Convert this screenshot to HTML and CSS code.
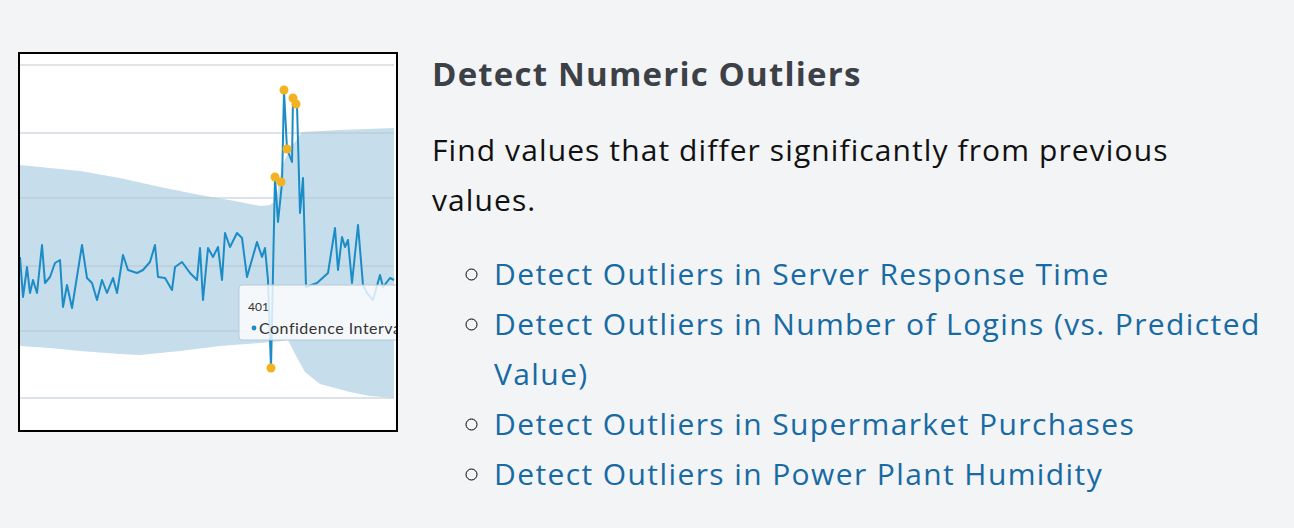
FILE: index.html
```html
<!DOCTYPE html>
<html lang="en">
<head>
	<title>Detect Numeric Outliers</title>
	<link rel="stylesheet" href="styles.css">
</head>

<body>
	<div class="feature">
		<div class="thumb">
			<svg class="chart" viewBox="0 0 376 376" width="376" height="376">
				<!-- confidence band -->
				<polygon class="band" points="0,111 20,113 60,117 100,124 140,133 180,141 215,147 240,152 250,151 256,147 262,112 270,95 282,78 320,76 374,74 374,344 350,342 330,338 300,330 285,318 275,300 268,286 262,287 240,289 200,292 160,297 120,301 100,300 60,297 30,294 0,292"/>
				<!-- grid -->
				<line class="grid top" x1="0" y1="11" x2="374" y2="11"/>
				<line class="grid" x1="0" y1="79" x2="374" y2="79"/>
				<line class="grid" x1="0" y1="144" x2="374" y2="144"/>
				<line class="grid" x1="0" y1="212" x2="374" y2="212"/>
				<line class="grid" x1="0" y1="277" x2="374" y2="277"/>
				<line class="grid" x1="0" y1="344" x2="374" y2="344"/>
				<!-- series -->
				<polyline class="series" points="0,203 3,243 7,213 10,239 13,226 17,239 22,191 25,229 30,223 35,209 40,206 43,253 47,231 52,254 62,191 67,224 72,229 77,246 82,226 87,239 93,224 97,239 103,201 108,216 117,219 123,216 130,208 135,191 138,223 145,224 152,236 155,213 162,208 170,219 177,226 180,194 183,246 188,194 193,203 198,193 202,226 205,179 210,193 217,179 222,184 227,223 237,188 242,203 245,194 248,226 251,314 255,123 258,168 262,129 264,37 267,95 272,108 273,44 277,51 280,159 283,124 286,233 297,229 308,219 315,174 318,216 322,183 325,193 328,186 332,229 338,171 343,231 347,239 353,246 360,221 363,233 370,224 374,226"/>
				<!-- outliers -->
				<circle class="dot" cx="264" cy="36" r="4.5"/>
				<circle class="dot" cx="273" cy="44" r="4.5"/>
				<circle class="dot" cx="276" cy="50" r="4.5"/>
				<circle class="dot" cx="267" cy="95" r="4.5"/>
				<circle class="dot" cx="255" cy="123" r="4.5"/>
				<circle class="dot" cx="261" cy="128" r="4.5"/>
				<circle class="dot" cx="251" cy="314" r="4.5"/>
				<!-- tooltip -->
				<rect class="tip" x="219" y="231" width="170" height="55" rx="3"/>
				<text class="tip-title" x="228" y="257">401</text>
				<circle class="tip-dot" cx="234" cy="274" r="2.4"/>
				<text class="tip-label" x="239" y="280">Confidence Interval</text>
			</svg>
		</div>

		<div class="info">
			<h2>Detect Numeric Outliers</h2>
			<p>Find values that differ significantly from previous values.</p>
			<ul>
				<li><a href="#">Detect Outliers in Server Response Time</a></li>
				<li><a href="#">Detect Outliers in Number of Logins (vs. Predicted Value)</a></li>
				<li><a href="#">Detect Outliers in Supermarket Purchases</a></li>
				<li><a href="#">Detect Outliers in Power Plant Humidity</a></li>
			</ul>
		</div>
	</div>
</body>
</html>
```

FILE: styles.css
```css
body {
	margin: 0;
	padding: 0;
	background: #f3f4f6;
	font-family: 'Open Sans', sans-serif;
}

.feature {
	display: flex;
	gap: 34px;
	padding: 52px 0 0 18px;
}

.thumb {
	flex: none;
	width: 376px;
	height: 376px;
	border: 2px solid #000;
	background: #fff;
	overflow: hidden;
}

.chart {
	display: block;
}

.band {
	fill: #c6ddec;
}

.grid {
	stroke: #b9c6d0;
	stroke-width: 1.2;
}

.grid.top {
	stroke: #e3e3e3;
	stroke-width: 2;
}

.series {
	fill: none;
	stroke: #1b8cc6;
	stroke-width: 2;
	stroke-linejoin: round;
}

.dot {
	fill: #f3b320;
}

.tip {
	fill: rgba(255, 255, 255, 0.8);
	stroke: #b5cad8;
	stroke-width: 1;
}

.tip-title {
	font-family: 'Lato', sans-serif;
	font-size: 12px;
	fill: #333;
}

.tip-label {
	font-family: 'Lato', sans-serif;
	font-size: 16px;
	letter-spacing: 0.5px;
	fill: #333;
}

.tip-dot {
	fill: #1b8cc6;
}

.info {
	width: 840px;
}

.info h2 {
	margin: 0;
	font-size: 33px;
	line-height: 44px;
	font-weight: 700;
	letter-spacing: 1.2px;
	color: #3c4148;
}

.info p {
	margin: 29px 0 0;
	font-size: 30px;
	line-height: 50px;
	letter-spacing: 1.1px;
	color: #111;
}

.info ul {
	margin: 24px 0 0;
	padding-left: 62px;
	list-style: circle;
	font-size: 30px;
	line-height: 50px;
	letter-spacing: 1.4px;
}

.info a {
	color: #176aa3;
	text-decoration: none;
}
```
